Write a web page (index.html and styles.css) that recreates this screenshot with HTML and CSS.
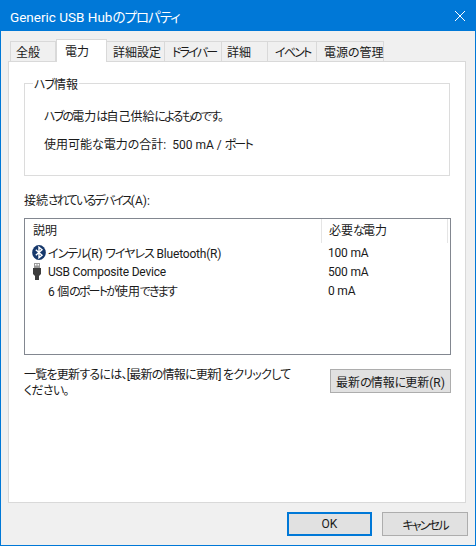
FILE: index.html
```html
<!DOCTYPE html>
<html lang="ja">
<head>
    <meta charset="UTF-8">
    <meta name="viewport" content="width=device-width, initial-scale=1.0">
    <title>Generic USB Hubのプロパティ</title>
    <link rel="stylesheet" href="styles.css">
</head>
<body>
    <div class="window">
        <!-- Title bar -->
        <div class="title-bar">
            <span class="title-text">Generic USB Hub<span class="kana">のプロパティ</span></span>
            <svg class="close-icon" width="10" height="10" viewBox="0 0 10 10">
                <path d="M0 0 L10 10 M10 0 L0 10" stroke="#fff" stroke-width="1" fill="none"/>
            </svg>
        </div>

        <div class="dialog-body">
            <!-- Tabs -->
            <div class="tabs">
                <div class="tab tab-general">全般</div>
                <div class="tab tab-power active">電力</div>
                <div class="tab tab-advanced">詳細設定</div>
                <div class="tab tab-driver"><span class="tight">ドライバー</span></div>
                <div class="tab tab-details">詳細</div>
                <div class="tab tab-events"><span class="tight">イベント</span></div>
                <div class="tab tab-manage">電源の管理</div>
            </div>

            <div class="panel">
                <!-- Hub info -->
                <div class="group-box">
                    <span class="group-title"><span class="kana">ハブ</span>情報</span>
                    <p class="info-line"><span class="tight">ハブの</span>電力<span class="tight">は</span>自己供給<span class="tight">によるものです。</span></p>
                    <p class="info-line">使用可能な電力の合計:&nbsp; 500 mA / <span class="tight">ポート</span></p>
                </div>

                <div class="list-label">接続<span class="tight">されているデバイス</span>(A):</div>

                <!-- Device list -->
                <div class="device-list">
                    <div class="list-header">
                        <div class="col-name">説明</div>
                        <div class="col-power">必要<span class="tight">な</span>電力</div>
                    </div>
                    <div class="list-row">
                        <svg class="row-icon" width="14" height="17" viewBox="0 0 14 17">
                            <ellipse cx="7" cy="8.5" rx="6.8" ry="7.6" fill="#16386b"/>
                            <path d="M3.8 5.8 L10 11.2 L7 13.8 L7 3.2 L10 5.8 L3.8 11.2" stroke="#fff" stroke-width="1.4" fill="none"/>
                        </svg>
                        <div class="col-name"><span class="kana">インテル</span>(R) <span class="kana">ワイヤレス</span> Bluetooth(R)</div>
                        <div class="col-value">100 mA</div>
                    </div>
                    <div class="list-row">
                        <svg class="row-icon" width="14" height="17" viewBox="0 0 14 17">
                            <rect x="2" y="0" width="6" height="5" fill="#9a9a9a"/>
                            <rect x="3" y="1" width="1.5" height="1.5" fill="#fff"/>
                            <rect x="5.5" y="1" width="1.5" height="1.5" fill="#fff"/>
                            <path d="M1 5 H9 V11 L7 13 V17 H3 V13 L1 11 Z" fill="#3c3c3c"/>
                        </svg>
                        <div class="col-name">USB Composite Device</div>
                        <div class="col-value">500 mA</div>
                    </div>
                    <div class="list-row">
                        <div class="row-icon"></div>
                        <div class="col-name">6 個<span class="tight">のポートが</span>使用<span class="tight">できます</span></div>
                        <div class="col-value">0 mA</div>
                    </div>
                </div>

                <div class="refresh-row">
                    <p class="refresh-note">一覧を更新するには、[最新の情報に更新] をクリックしてください。</p>
                    <button class="btn btn-refresh">最新<span class="kana">の</span>情報<span class="kana">に</span>更新(R)</button>
                </div>
            </div>

            <!-- Bottom buttons -->
            <div class="dialog-buttons">
                <button class="btn btn-ok">OK</button>
                <button class="btn btn-cancel"><span class="tight">キャンセル</span></button>
            </div>
        </div>
    </div>
</body>
</html>
```

FILE: styles.css
```css
html, body {
    margin: 0;
    padding: 0;
}

body {
    width: 476px;
    height: 546px;
    overflow: hidden;
    font-family: "Roboto", "Noto Sans CJK JP", sans-serif;
    font-feature-settings: "palt";
    font-size: 12px;
    color: #1a1a1a;
}

/* kana in the dialog font runs narrower than Noto's */
.kana {
    letter-spacing: -1px;
}

.tight {
    letter-spacing: -1.8px;
}

.window {
    box-sizing: border-box;
    width: 476px;
    height: 546px;
    border: 1px solid #0078d7;
    display: flex;
    flex-direction: column;
}

.title-bar {
    height: 30px;
    flex: none;
    background: #0078d7;
    color: #fff;
    display: flex;
    align-items: center;
    justify-content: space-between;
    padding: 0 10px 0 9px;
    font-size: 13.5px;
}

.dialog-body {
    flex: 1;
    background: #f0f0f0;
    padding: 10px 9px 0 7px;
    display: flex;
    flex-direction: column;
}

.tabs {
    display: flex;
    height: 20px;
    padding-left: 2px;
    align-items: flex-end;
}

.tab {
    box-sizing: border-box;
    height: 20px;
    border: 1px solid #d9d9d9;
    border-bottom: none;
    border-left: none;
    display: flex;
    align-items: center;
    white-space: nowrap;
}

.tab-general {
    width: 46px;
    padding-left: 5px;
    border-left: 1px solid #d9d9d9;
}

.tab-power { width: 51px; padding-left: 8px; }
.tab-advanced { width: 58px; padding-left: 6px; }
.tab-driver { width: 57px; padding-left: 7px; }
.tab-details { width: 46px; padding-left: 5px; }
.tab-events { width: 49px; padding-left: 7px; }
.tab-manage { width: 67px; padding-left: 7px; }

.tab.active {
    height: 23px;
    padding-bottom: 2px;
    background: #fff;
    border-left: 1px solid #d9d9d9;
    margin-bottom: -1px;
    position: relative;
    z-index: 1;
}

.panel {
    box-sizing: border-box;
    height: 442px;
    background: #fff;
    border: 1px solid #d9d9d9;
    padding: 21px 15px 0 15px;
}

.group-box {
    box-sizing: border-box;
    height: 93px;
    border: 1px solid #dcdcdc;
    padding: 25px 0 0 19px;
    position: relative;
}

.group-title {
    position: absolute;
    left: 8px;
    top: -9px;
    background: #fff;
    padding: 0 1px;
}

.info-line {
    margin: 0 0 11px;
    line-height: 17px;
}

.list-label {
    margin-top: 17px;
    line-height: 17px;
}

.device-list {
    box-sizing: border-box;
    height: 137px;
    width: 427px;
    margin-top: 8px;
    border: 1px solid #828790;
}

.list-header {
    display: flex;
    height: 24px;
    align-items: center;
}

.list-header .col-name {
    box-sizing: border-box;
    width: 297px;
    height: 24px;
    line-height: 24px;
    padding-left: 8px;
    border-right: 1px solid #e5e5e5;
}

.list-header .col-power {
    box-sizing: border-box;
    width: 126px;
    height: 24px;
    line-height: 24px;
    padding-left: 7px;
    border-right: 1px solid #e5e5e5;
}

.list-row {
    display: flex;
    height: 19px;
    align-items: center;
    letter-spacing: -0.2px;
}

.row-icon {
    width: 14px;
    height: 17px;
    flex: none;
    margin: 0 2px 0 7px;
}

.list-row .col-name {
    width: 273px;
    white-space: nowrap;
}

.list-row .col-value {
    padding-left: 7px;
}

.refresh-row {
    display: flex;
    justify-content: space-between;
    align-items: flex-start;
    width: 427px;
    margin-top: 12px;
}

.refresh-note {
    margin: 0;
    width: 268px;
    line-height: 16px;
    letter-spacing: -0.75px;
}

.btn {
    box-sizing: border-box;
    height: 24px;
    padding: 0;
    background: #e1e1e1;
    border: 1px solid #adadad;
    font-family: inherit;
    font-feature-settings: inherit;
    font-size: 12px;
    color: #1a1a1a;
}

.btn-refresh {
    width: 121px;
    margin-top: 2px;
}

.dialog-buttons {
    display: flex;
    justify-content: flex-end;
    gap: 10px;
    margin-top: 9px;
    margin-right: -2px;
}

.btn-ok {
    width: 85px;
    border: 2px solid #0078d7;
}

.btn-cancel {
    width: 86px;
}
```
